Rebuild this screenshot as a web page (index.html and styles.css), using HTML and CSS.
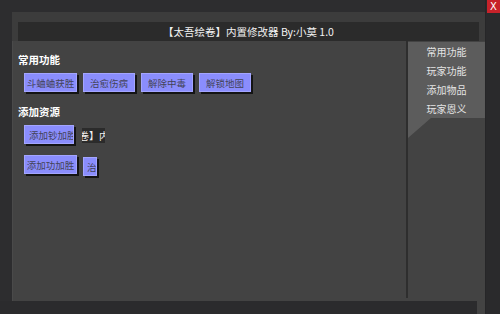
FILE: index.html
```html
<!DOCTYPE html>
<html lang="zh-CN">
<head>
    <meta charset="UTF-8">
    <title>太吾绘卷 内置修改器</title>
    <link rel="stylesheet" href="styles.css">
</head>
<body>
<div class="window">
    <div class="gutter"></div>
    <div class="panel">
        <div class="header">
            <div class="title">【太吾绘卷】内置修改器 By:小莫 1.0</div>
        </div>
        <div class="body">
            <div class="content">
                <div class="section-label">常用功能</div>
                <div class="btn-row">
                    <button class="btn wide">斗蛐蛐获胜</button>
                    <button class="btn">治愈伤病</button>
                    <button class="btn">解除中毒</button>
                    <button class="btn">解锁地图</button>
                </div>
                <div class="section-label">添加资源</div>
                <div class="btn-row glitch">
                    <button class="btn wide cut">添加钞加胜</button>
                    <span class="ghost-title"><span>卷】内置</span></span>
                </div>
                <div class="btn-row glitch second">
                    <button class="btn wide">添加功加胜</button>
                    <button class="btn tiny">治愈伤病</button>
                </div>
            </div>
            <div class="divider"></div>
            <div class="sidebar">
                <div class="menu">
                    <a href="#">常用功能</a>
                    <a href="#">玩家功能</a>
                    <a href="#">添加物品</a>
                    <a href="#">玩家恩义</a>
                </div>
            </div>
        </div>
        <div class="footer">
            <div class="footer-bar"></div>
        </div>
    </div>
    <div class="rail">
        <div class="close">X</div>
    </div>
</div>
</body>
</html>
```
FILE: styles.css
```css
html, body {
    margin: 0;
    padding: 0;
}
body {
    width: 500px;
    height: 314px;
    overflow: hidden;
    background-color: #2d2d2f;
    font-family: "Noto Sans CJK SC", "DejaVu Sans", sans-serif;
}
.window {
    display: flex;
    height: 314px;
}
.gutter {
    width: 12px;
    background-color: #2d2d2f;
}
.panel {
    width: 474px;
    margin-top: 12px;
    background-color: #434343;
    display: flex;
    flex-direction: column;
}
.header {
    height: 29px;
    padding: 10px 6px 0 6px;
    box-sizing: border-box;
    background-color: #3c3c3c;
}
.title {
    height: 19px;
    line-height: 19px;
    background-color: #2b2b2b;
    color: #f2f2f2;
    font-size: 10.5px;
    text-align: center;
}
.body {
    flex: 1;
    display: flex;
    border-left: 1px solid #4a4a4a;
}
.content {
    width: 388px;
    padding: 12px 0 0 5px;
}
.section-label {
    color: #ffffff;
    font-size: 10.5px;
    font-weight: bold;
    line-height: 14px;
}
.btn-row {
    display: flex;
    gap: 6px;
    margin: 6px 0 13px 6px;
}
.btn {
    width: 52px;
    height: 19px;
    padding: 0;
    font-family: inherit;
    font-size: 9.5px;
    text-align: center;
    color: #434358;
    background-color: #8a8dfd;
    border: 1px solid #a3a5ff;
    box-shadow: 2px 2px 0 #141414;
    white-space: nowrap;
    overflow: hidden;
}
.btn.wide {
    width: 53px;
}
.btn.cut {
    width: 50px;
    text-align: left;
    padding-left: 4px;
}
.btn.tiny {
    width: 14px;
    text-indent: 3px;
    text-align: left;
    margin-top: 2px;
}
.btn-row.glitch {
    margin-bottom: 11px;
}
.btn-row.second {
    margin-bottom: 0;
}
.ghost-title {
    width: 23px;
    height: 15px;
    margin: 3px 0 0 2px;
    background-color: #2b2b2b;
    color: #f2f2f2;
    font-size: 10px;
    line-height: 15px;
    overflow: hidden;
    white-space: nowrap;
}
.ghost-title span {
    display: inline-block;
    margin-left: -3px;
}
.divider {
    width: 2px;
    margin-bottom: 3px;
    background-color: #2e2e2e;
}
.sidebar {
    width: 77px;
    margin-top: 1px;
}
.menu {
    height: 96px;
    background-color: #5c5c5c;
    clip-path: polygon(0 0, 100% 0, 100% 76px, 23px 76px, 0 96px);
}
.menu a {
    display: block;
    height: 19px;
    line-height: 19px;
    text-align: center;
    color: #e4e4e4;
    font-size: 10px;
    text-decoration: none;
}
.footer {
    height: 13px;
}
.footer-bar {
    width: 477px;
    height: 13px;
    margin-left: -12px;
    background-color: #2b2b2d;
}
.rail {
    width: 14px;
    background-color: #2a2a2c;
    border-left: 1px solid #262628;
    position: relative;
    z-index: 1;
}
.close {
    height: 13px;
    margin-left: 1px;
    background-color: #c7222a;
    color: #ffffff;
    font-family: "DejaVu Sans", sans-serif;
    font-size: 10px;
    line-height: 13px;
    text-align: center;
}
```
